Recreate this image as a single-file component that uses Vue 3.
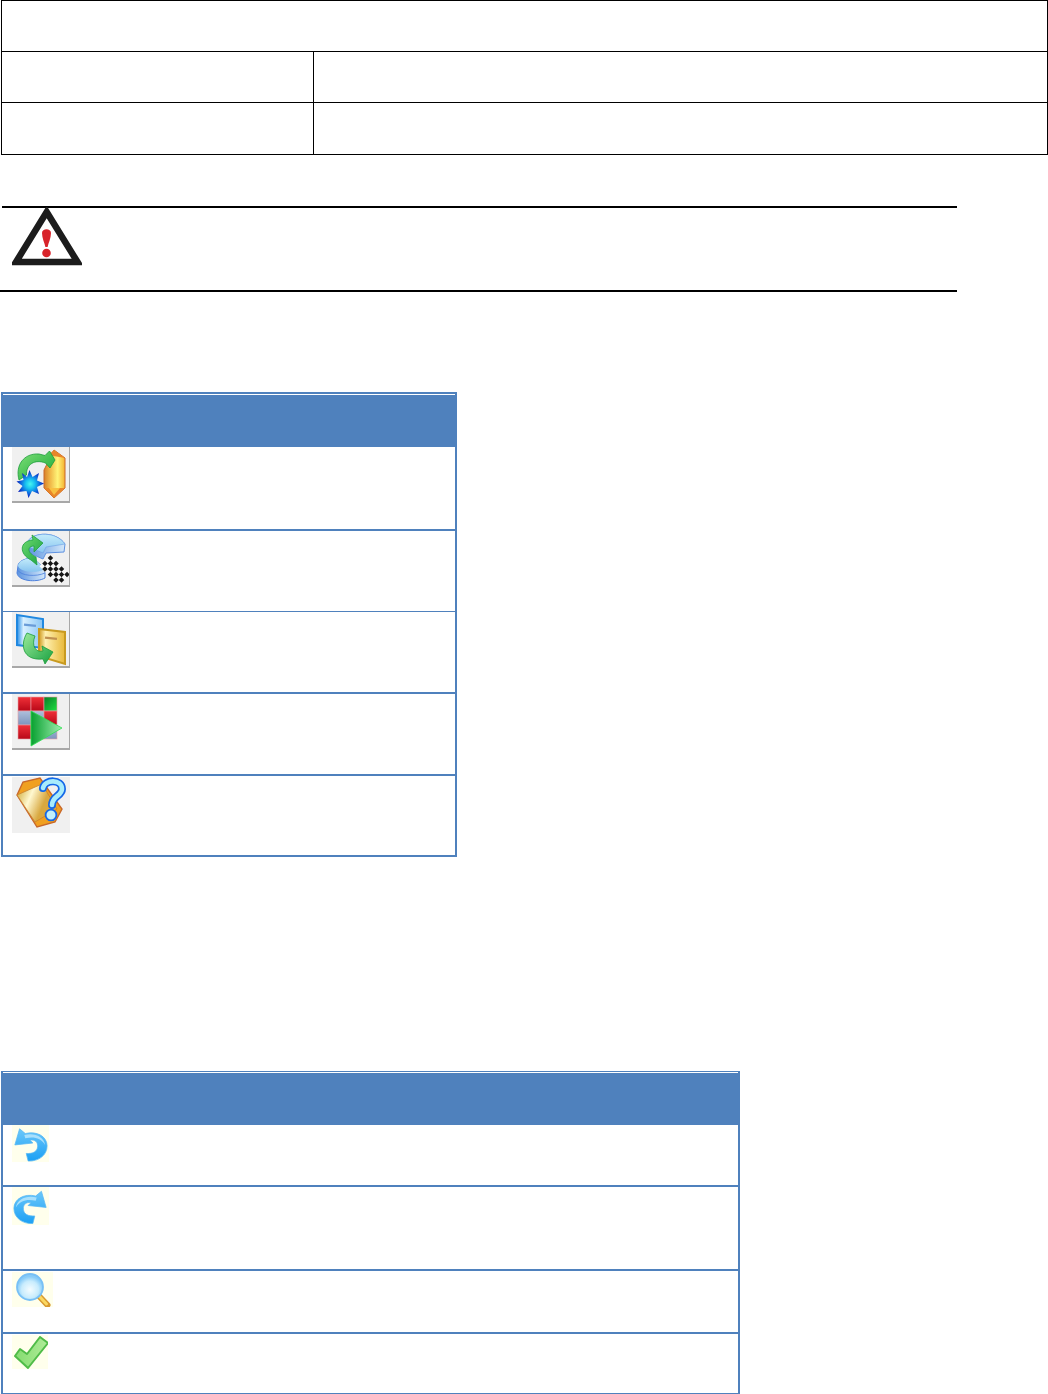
<script setup>
// checker strip on the restore icon
const checks = []
for (let r = 0; r < 4; r++) {
  for (let c = 0; c < 7; c++) {
    if ((r + c) % 2 === 0) checks.push({ x: 29 + c * 3.9, y: 31 + r * 3.9 })
  }
}
</script>

<template>
  <main class="page">
    <section class="spec">
      <div class="spec-row wide"></div>
      <div class="spec-row split"><div></div><div></div></div>
      <div class="spec-row split last"><div></div><div></div></div>
    </section>

    <section class="callout">
      <svg class="warn" width="70" height="60" viewBox="0 0 70 60">
        <path d="M34.7 5 L65.5 55 H4 Z" fill="#fff" stroke="#1c1c1c" stroke-width="6.5" stroke-linejoin="miter" />
        <path d="M30 26 C30 21 39 21 39 26 C39 31 36.4 36 35.6 40 H33.4 C32.6 36 30 31 30 26 Z" fill="#d8232a" />
        <circle cx="34.5" cy="46" r="4.3" fill="#d8232a" />
      </svg>
    </section>

    <section class="box narrow">
      <div class="box-head"></div>
      <div class="tool row-a">
        <div class="tile">
          <svg width="58" height="56" viewBox="0 0 58 56">
            <defs>
              <linearGradient id="prism" x1="0" x2="1" y1="0" y2="0">
                <stop offset="0" stop-color="#d88028" />
                <stop offset="0.3" stop-color="#f0b848" />
                <stop offset="0.65" stop-color="#fff478" />
                <stop offset="1" stop-color="#f4b030" />
              </linearGradient>
              <radialGradient id="burst">
                <stop offset="0" stop-color="#48f4f0" />
                <stop offset="0.35" stop-color="#18c0f0" />
                <stop offset="0.65" stop-color="#1070e0" />
                <stop offset="1" stop-color="#0a1cb8" />
              </radialGradient>
              <linearGradient id="arrowGreen" x1="0" x2="1" y1="0" y2="1">
                <stop offset="0" stop-color="#80e078" />
                <stop offset="1" stop-color="#18a838" />
              </linearGradient>
            </defs>
            <path d="M42 3 L53 11 V41 L42 51 L32 41 V23 Z" fill="url(#prism)" stroke="#c8682a" stroke-width="1" />
            <path d="M36 8 L42 3 L53 11 Z M32 41 L42 51 L53 41 Z" fill="#e8862a" />
            <path d="M37 41 L42 48 L48 41 Z" fill="#f8c040" />
            <path d="M7 33 C3 18 12 6 27 7 L33 8.5 L37.5 4 L43 13 L38 21 L33.5 16 C23 12 14 17 14.5 28 Z" fill="url(#arrowGreen)" stroke="#1c9c3a" stroke-width="0.8" />
            <path d="M17.5 23 L20.5 30 L27 26 L25 33.5 L32 36.5 L25 40 L27 47 L20 44 L16.5 51 L14.5 44 L6 45 L10.5 39 L4.5 34.5 L11.5 33 L10 26 L15 30 Z" fill="url(#burst)" />
          </svg>
        </div>
      </div>
      <div class="tool row-b thin-line">
        <div class="tile">
          <svg width="58" height="56" viewBox="0 0 58 56">
            <defs>
              <linearGradient id="disc" x1="0" x2="0" y1="0" y2="1">
                <stop offset="0" stop-color="#c4ecfa" />
                <stop offset="1" stop-color="#88c4f0" />
              </linearGradient>
              <linearGradient id="discSide" x1="0" x2="1" y1="0" y2="0">
                <stop offset="0" stop-color="#5c94e0" />
                <stop offset="1" stop-color="#d4e8fa" />
              </linearGradient>
              <linearGradient id="arrowGreen2" x1="0" x2="1" y1="0" y2="1">
                <stop offset="0" stop-color="#70dc70" />
                <stop offset="1" stop-color="#18a040" />
              </linearGradient>
            </defs>
            <path d="M16 10 C22 1 44 0 53 13 L52 21 L34 22 L31 28 L17 22 Z" fill="url(#discSide)" stroke="#5c90e0" stroke-width="1" />
            <path d="M16 10 C22 1 44 0 53 13 L34 16 L31 22 L17 16 Z" fill="url(#disc)" stroke="#6ca0e4" stroke-width="0.6" />
            <path d="M6 35 C6 30 14 27 21 27 L33 38 V47 C24 52 6 50 5 42 Z" fill="url(#discSide)" stroke="#4c80dc" stroke-width="1" />
            <path d="M5.5 39 C9 45 24 46 33 42" fill="none" stroke="#4c80dc" stroke-width="0.8" />
            <path d="M6 35 C6 30 14 27 21 27 L33 38 C24 43 8 41 6 35 Z" fill="url(#disc)" />
            <path d="M19 29 C7 23 7 10 21 9 L20 4 L31 12 L22 21 L22 15 C15 15 15 22 24 26 L25 34 Z" fill="url(#arrowGreen2)" stroke="#20a040" stroke-width="0.8" />
            <g transform="rotate(45 42 39)">
              <rect x="29" y="31" width="27.3" height="15.6" fill="#f8f8f8" />
              <rect v-for="(s, i) in checks" :key="i" :x="s.x" :y="s.y" width="3.9" height="3.9" fill="#161616" />
            </g>
          </svg>
        </div>
      </div>
      <div class="tool row-c">
        <div class="tile">
          <svg width="58" height="56" viewBox="0 0 58 56">
            <defs>
              <linearGradient id="bookBlue" x1="0" x2="1" y1="0" y2="0">
                <stop offset="0" stop-color="#2a90e8" />
                <stop offset="0.25" stop-color="#d8f0ff" />
                <stop offset="1" stop-color="#88c4f4" />
              </linearGradient>
              <linearGradient id="bookYellow" x1="0" x2="1" y1="0" y2="0">
                <stop offset="0" stop-color="#d09a20" />
                <stop offset="0.25" stop-color="#fff0b0" />
                <stop offset="1" stop-color="#e8b838" />
              </linearGradient>
              <linearGradient id="uTurn" x1="0" x2="1" y1="0" y2="1">
                <stop offset="0" stop-color="#9aea9a" />
                <stop offset="1" stop-color="#18a040" />
              </linearGradient>
            </defs>
            <path d="M5 3 L31 7 V36 L5 33 Z" fill="url(#bookBlue)" stroke="#2088e0" stroke-width="2" />
            <rect x="12" y="12" width="12" height="2.5" fill="#6a9cd8" transform="rotate(6 18 13)" />
            <path d="M27 17 L53 20 V52 L27 44 Z" fill="url(#bookYellow)" stroke="#c89a20" stroke-width="2" />
            <rect x="33" y="25" width="12" height="2.5" fill="#c09050" transform="rotate(6 39 26)" />
            <path d="M15 21 C8 32 10 49 31 47 L33 52 L41 40 L30 34 L31 39 C24 41 19 34 23 24 Z" fill="url(#uTurn)" stroke="#1c9c3a" stroke-width="0.8" />
          </svg>
        </div>
      </div>
      <div class="tool row-c">
        <div class="tile">
          <svg width="58" height="56" viewBox="0 0 58 56">
            <defs>
              <linearGradient id="red" x1="0" x2="0" y1="0" y2="1">
                <stop offset="0" stop-color="#f03038" />
                <stop offset="1" stop-color="#b80818" />
              </linearGradient>
              <linearGradient id="slate" x1="0" x2="0" y1="0" y2="1">
                <stop offset="0" stop-color="#aebfdc" />
                <stop offset="1" stop-color="#7c94bc" />
              </linearGradient>
              <linearGradient id="lime" x1="0" x2="1" y1="0" y2="1">
                <stop offset="0" stop-color="#087c28" />
                <stop offset="1" stop-color="#20e040" />
              </linearGradient>
              <linearGradient id="play" x1="0" x2="1" y1="0" y2="0">
                <stop offset="0" stop-color="#08a030" />
                <stop offset="1" stop-color="#a0f0b0" />
              </linearGradient>
            </defs>
            <g stroke="#e8a0a8" stroke-width="0.6">
              <rect x="6" y="3" width="13" height="14" fill="url(#red)" />
              <rect x="19" y="3" width="13" height="14" fill="url(#red)" />
              <rect x="32" y="3" width="13" height="14" fill="url(#lime)" />
              <rect x="6" y="17" width="13" height="14" fill="url(#slate)" />
              <rect x="19" y="17" width="13" height="14" fill="url(#slate)" />
              <rect x="32" y="17" width="13" height="14" fill="url(#red)" />
              <rect x="6" y="31" width="13" height="14" fill="url(#red)" />
              <rect x="19" y="31" width="13" height="14" fill="url(#slate)" />
              <rect x="32" y="31" width="13" height="14" fill="url(#slate)" />
            </g>
            <path d="M19 17 L50 34 L19 52 Z" fill="url(#play)" stroke="#30e050" stroke-width="0.8" />
          </svg>
        </div>
      </div>
      <div class="tool row-d end">
        <div class="tile flat">
          <svg width="58" height="56" viewBox="0 0 58 56">
            <defs>
              <linearGradient id="tagFace" x1="0" x2="1" y1="0.3" y2="0.7">
                <stop offset="0" stop-color="#d8b850" />
                <stop offset="0.3" stop-color="#fff8d0" />
                <stop offset="0.65" stop-color="#d8a840" />
                <stop offset="1" stop-color="#e8a838" />
              </linearGradient>
            </defs>
            <path d="M5 18 L11 5 L28 1 L50 32 L43 45 L25 50 Z" fill="#f0a020" stroke="#c8682a" stroke-width="1.4" />
            <path d="M5 18 L30 7 L45 32 L23 45 Z" fill="url(#tagFace)" stroke="#c88030" stroke-width="0.8" />
            <path d="M31 11 C33 2 50 2 50 12 C50 19 40 19 40 28" fill="none" stroke="#1468e8" stroke-width="8" stroke-linecap="round" />
            <path d="M31 11 C33 2 50 2 50 12 C50 19 40 19 40 28" fill="none" stroke="#a8ecfc" stroke-width="4.6" stroke-linecap="round" />
            <circle cx="39" cy="38" r="5.4" fill="#c0f0fc" stroke="#1468e8" stroke-width="1.8" />
          </svg>
        </div>
      </div>
    </section>

    <section class="box medium">
      <div class="box-head"></div>
      <div class="tool row-s">
        <div class="tile pale p37">
          <svg width="37" height="37" viewBox="0 0 39 37">
            <defs>
              <linearGradient id="sky" x1="0" x2="0" y1="0" y2="1">
                <stop offset="0" stop-color="#6cc8fa" />
                <stop offset="1" stop-color="#1ca0f4" />
              </linearGradient>
            </defs>
            <path d="M8 3 L3 20 L22 18 L19 15 C24 14 27.5 17 27 22 C26.5 27 22 29.5 15 29 L17 37 C28 37.5 37 31 37 21 C37 11 26 5 14 8 Z" fill="url(#sky)" stroke="#58b8f4" stroke-width="0.8" />
            <path d="M13 9.5 C24 7 33 11 35 20 C30 13 24 11 14 13 Z" fill="#a8e0fc" />
          </svg>
        </div>
      </div>
      <div class="tool row-l">
        <div class="tile pale p37 tall">
          <svg width="37" height="38" viewBox="0 0 39 37">
            <g transform="translate(39 0) scale(-1 1)">
              <path d="M8 3 L3 20 L22 18 L19 15 C24 14 27.5 17 27 22 C26.5 27 22 29.5 15 29 L17 37 C28 37.5 37 31 37 21 C37 11 26 5 14 8 Z" fill="url(#sky)" stroke="#58b8f4" stroke-width="0.8" />
              <path d="M13 9.5 C24 7 33 11 35 20 C30 13 24 11 14 13 Z" fill="#a8e0fc" />
            </g>
          </svg>
        </div>
      </div>
      <div class="tool row-s">
        <div class="tile pale glass">
          <svg width="41" height="35" viewBox="0 0 41 35">
            <defs>
              <radialGradient id="lens" cx="0.5" cy="0.6">
                <stop offset="0" stop-color="#f4fcff" />
                <stop offset="0.65" stop-color="#c8ecfd" />
                <stop offset="1" stop-color="#88ccf8" />
              </radialGradient>
            </defs>
            <path d="M27 24 L35.5 33" stroke="#d89a30" stroke-width="6" stroke-linecap="round" />
            <path d="M28 25 L34.5 32" stroke="#fbd860" stroke-width="3" stroke-linecap="round" />
            <circle cx="18" cy="15" r="13" fill="url(#lens)" stroke="#78c0f6" stroke-width="1.8" />
          </svg>
        </div>
      </div>
      <div class="tool row-e end">
        <div class="tile pale tick">
          <svg width="36" height="34" viewBox="0 0 36 34">
            <defs>
              <linearGradient id="tickFill" x1="0" x2="1" y1="0" y2="0">
                <stop offset="0" stop-color="#84dc70" />
                <stop offset="1" stop-color="#b0ec98" />
              </linearGradient>
            </defs>
            <path d="M3 21 L8 14 L15 19 L28 2 L36 8 L16 33 Z" fill="url(#tickFill)" stroke="#50bc48" stroke-width="2" stroke-linejoin="round" />
          </svg>
        </div>
      </div>
    </section>
  </main>
</template>

<style scoped>
.page {
  width: 1048px;
  height: 1394px;
  overflow: hidden;
  background: #fff;
}

.spec {
  margin-left: 1px;
  width: 1047px;
  box-sizing: border-box;
  border: 1px solid #000;
}

.spec-row {
  height: 51px;
  box-sizing: border-box;
  border-bottom: 1px solid #000;
}

.spec-row.last {
  border-bottom: 0;
}

.split {
  display: grid;
  grid-template-columns: 312px 1fr;
}

.split > div:first-child {
  border-right: 1px solid #000;
}

.callout {
  margin-top: 51px;
  width: 957px;
  height: 86px;
  box-sizing: border-box;
  border-bottom: 2px solid #000;
}

.callout::before {
  content: "";
  display: block;
  margin-left: 2px;
  height: 2px;
  background: #000;
}

.warn {
  display: block;
  margin-left: 12px;
  margin-top: -1px;
  filter: blur(0.4px);
}

.box {
  margin-left: 1px;
  box-sizing: border-box;
  border: 2px solid #4f81bd;
}

.narrow {
  margin-top: 100px;
  width: 456px;
}

.medium {
  margin-top: 214px;
  width: 739px;
  border-top-width: 1px;
}

.box-head {
  height: 52px;
  background: #4f81bd;
  border-top: 1px solid #fff;
}

.tool {
  box-sizing: border-box;
  padding-left: 9px;
  border-bottom: 2px solid #4f81bd;
}

.tool.end {
  border-bottom: 0;
}

.thin-line {
  border-bottom-width: 1px;
}

.row-a { height: 84px; }
.row-b { height: 81px; }
.row-c { height: 82px; }
.row-d { height: 79px; padding-top: 1px; }
.row-s { height: 62px; }
.row-l { height: 84px; }
.row-e { height: 59px; padding-top: 1px; }

.tile {
  width: 58px;
  height: 56px;
  box-sizing: border-box;
  background: #f0f0f0;
  border-right: 1px solid #a8a8a8;
  border-bottom: 2px solid #a8a8a8;
  overflow: hidden;
}

.tile svg {
  display: block;
  filter: blur(0.4px);
}

.tile.flat {
  border: 0;
}

.tile.pale {
  background: #ffffec;
  border: 0;
}

.p37 { width: 37px; height: 37px; }
.p37.tall { height: 38px; }
.glass { width: 41px; height: 35px; margin-top: 1px; }
.tick { width: 36px; height: 34px; }
</style>

<style>
html, body {
  background: #fff;
}
</style>
